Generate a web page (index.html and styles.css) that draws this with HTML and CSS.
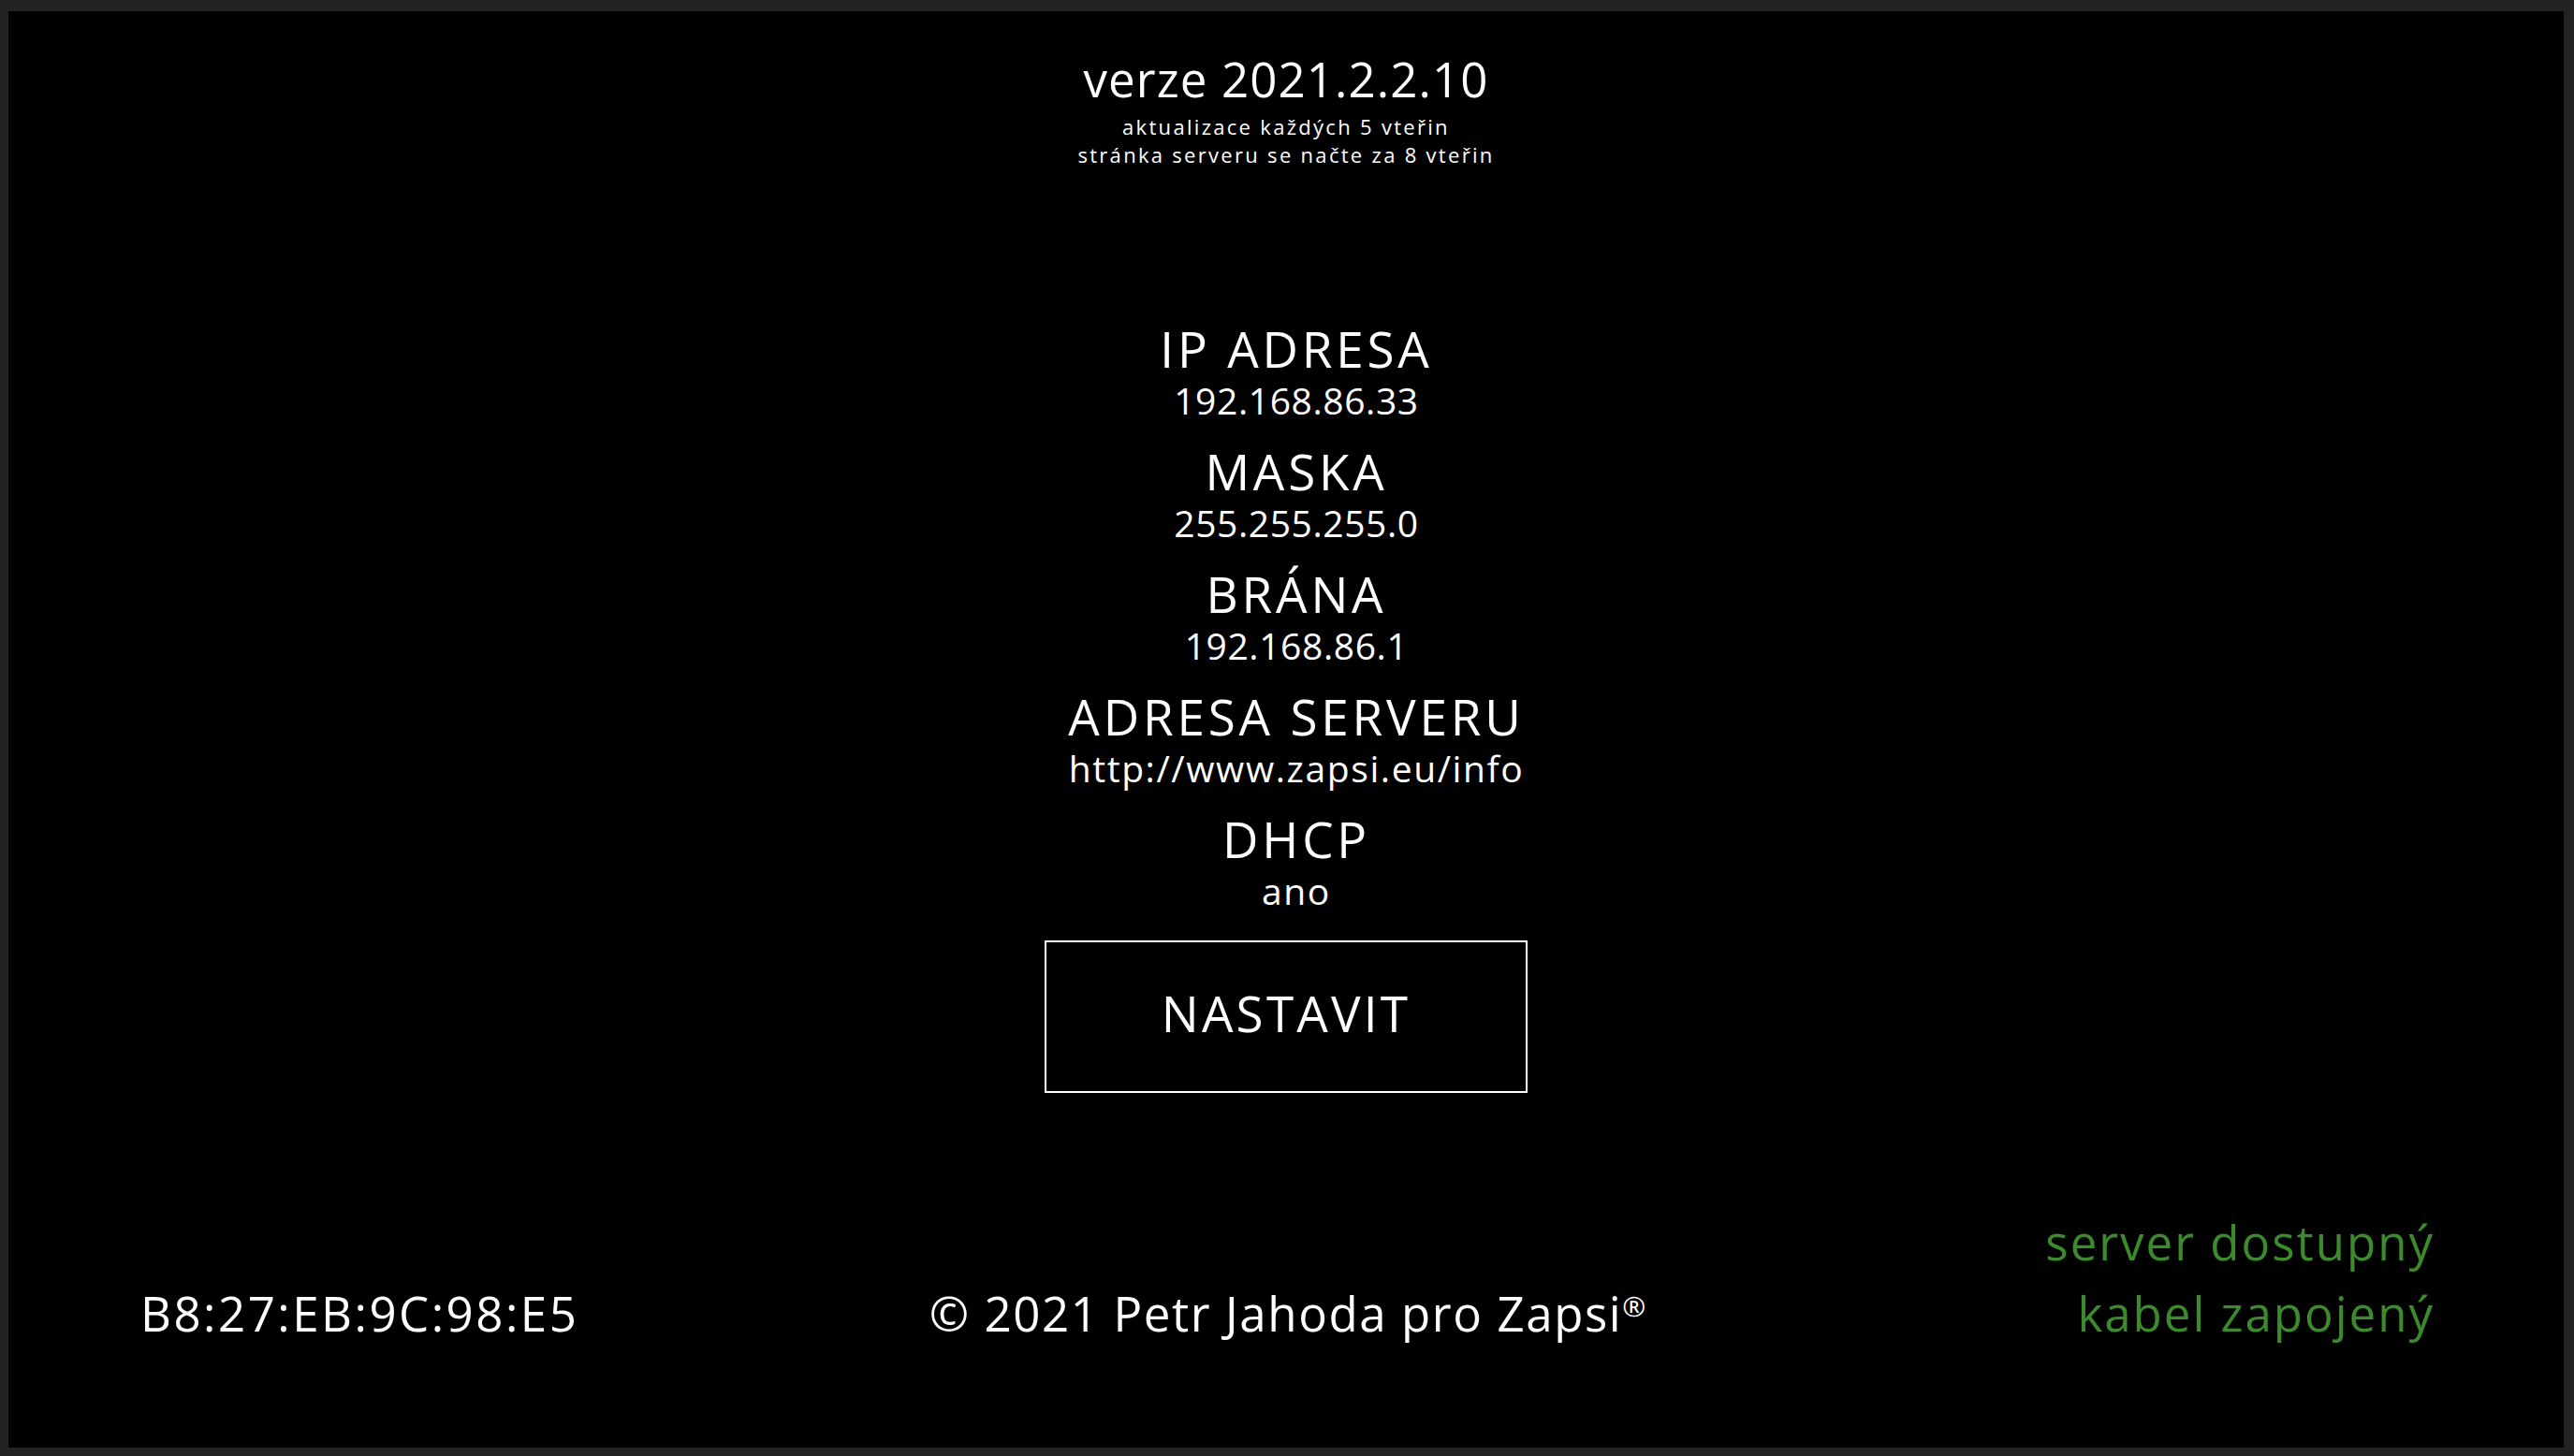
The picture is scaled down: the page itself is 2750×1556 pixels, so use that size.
FILE: index.html
```html
<!DOCTYPE html>
<html lang="cs">
<head>
<meta charset="utf-8">
<title>Zapsi</title>
<link rel="stylesheet" href="styles.css">
</head>
<body>
<div class="screen">
  <header class="head">
    <div class="version">verze 2021.2.2.10</div>
    <div class="sub">aktualizace každých 5 vteřin</div>
    <div class="sub">stránka serveru se načte za 8 vteřin</div>
  </header>
  <main class="info">
    <div class="item"><div class="label">IP ADRESA</div><div class="value num">192.168.86.33</div></div>
    <div class="item"><div class="label">MASKA</div><div class="value num">255.255.255.0</div></div>
    <div class="item"><div class="label">BRÁNA</div><div class="value num">192.168.86.1</div></div>
    <div class="item"><div class="label">ADRESA SERVERU</div><div class="value">http://www.zapsi.eu/info</div></div>
    <div class="item"><div class="label">DHCP</div><div class="value">ano</div></div>
  </main>
  <div class="btn-row"><div class="btn">NASTAVIT</div></div>
  <footer class="foot">
    <div class="mac">B8:27:EB:9C:98:E5</div>
    <div class="copy">© 2021 Petr Jahoda pro Zapsi<span class="reg">®</span></div>
    <div class="status"><div>server dostupný</div><div>kabel zapojený</div></div>
  </footer>
</div>
</body>
</html>
```
FILE: styles.css
```css
html, body {
  margin: 0;
  padding: 0;
  background: #232323;
}
body {
  width: 2750px;
  height: 1556px;
  overflow: hidden;
  font-family: "Open Sans", "Noto Sans", sans-serif;
  font-weight: 400;
  color: #ffffff;
}
.screen {
  margin: 12px 11px 0 9px;
  height: 1535px;
  background: #000;
  display: flex;
  flex-direction: column;
  box-sizing: border-box;
  padding-top: 47px;
}
.head {
  text-align: center;
}
.version {
  font-size: 51px;
  line-height: 51px;
  letter-spacing: 1.1px;
  margin-bottom: 10px;
}
.sub {
  font-size: 22px;
  line-height: 30px;
  letter-spacing: 2.3px;
}
.info {
  margin-top: 163px;
  display: flex;
  flex-direction: column;
  align-items: center;
  gap: 21px;
  padding-left: 22px;
}
.item {
  text-align: center;
}
.label {
  font-size: 53px;
  line-height: 60px;
  letter-spacing: 3.8px;
}
.value {
  font-size: 39px;
  line-height: 50px;
  letter-spacing: 1.6px;
}
.value.num {
  letter-spacing: 0.6px;
}
.btn-row {
  display: flex;
  justify-content: center;
  margin-top: 28px;
}
.btn {
  width: 516px;
  height: 163px;
  box-sizing: border-box;
  border: 2px solid #fff;
  padding-bottom: 8px;
  display: flex;
  align-items: center;
  justify-content: center;
  font-size: 53px;
  letter-spacing: 3.2px;
}
.foot {
  margin-top: auto;
  display: grid;
  grid-template-columns: 1fr auto 1fr;
  align-items: end;
  padding: 0 138px 106px 141px;
  font-size: 51px;
  line-height: 76px;
}
.mac {
  justify-self: start;
  letter-spacing: 2.5px;
}
.copy {
  justify-self: center;
  letter-spacing: 1.6px;
}
.reg {
  font-size: 30px;
  line-height: 0;
  vertical-align: 16px;
  letter-spacing: 0;
}
.status {
  justify-self: end;
  text-align: right;
  color: #3b8a2c;
  letter-spacing: 2px;
}
```
